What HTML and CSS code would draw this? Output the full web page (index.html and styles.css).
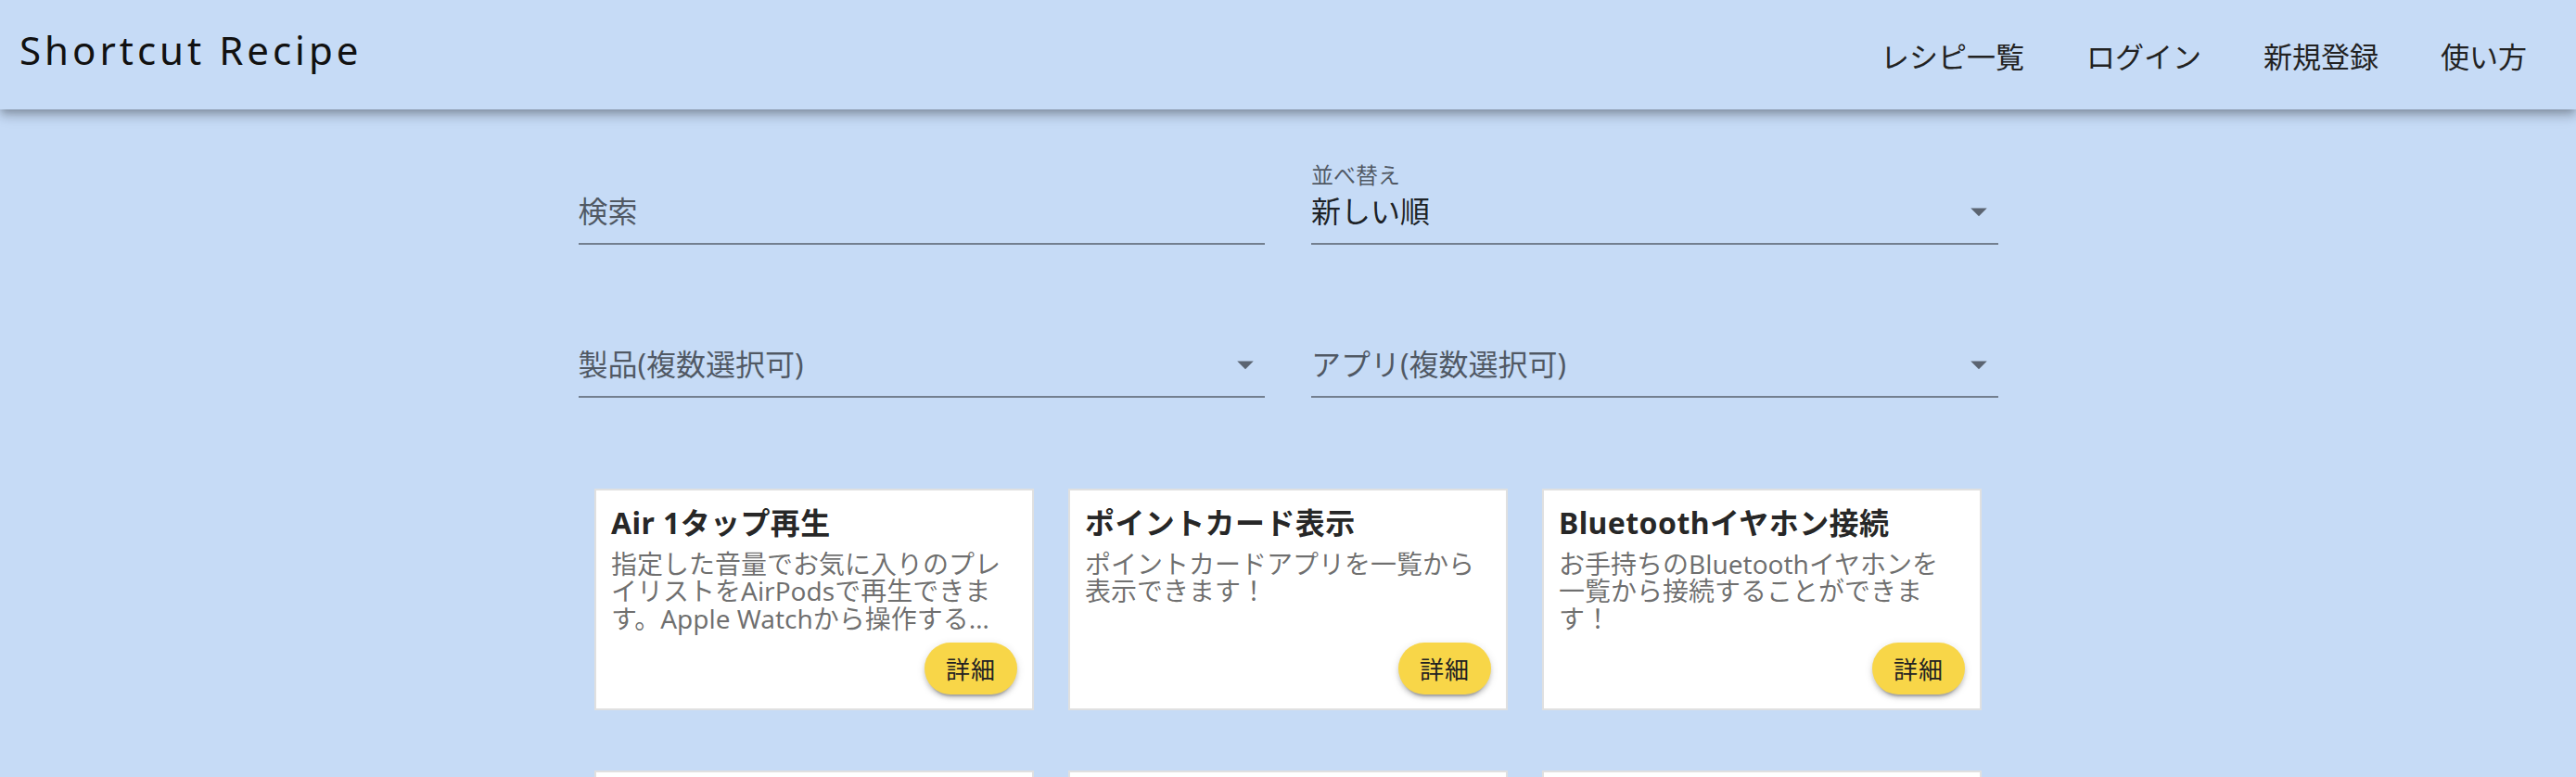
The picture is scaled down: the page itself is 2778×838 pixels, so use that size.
FILE: index.html
```html
<!DOCTYPE html>
<html lang="ja">
<head>
<meta charset="utf-8">
<title>Shortcut Recipe</title>
<link rel="stylesheet" href="styles.css">
</head>
<body>
<header class="appbar">
  <div class="brand">Shortcut Recipe</div>
  <nav class="nav">
    <a class="nav-item">レシピ一覧</a>
    <a class="nav-item">ログイン</a>
    <a class="nav-item">新規登録</a>
    <a class="nav-item">使い方</a>
  </nav>
</header>

<main class="main">
  <section class="filters">
    <div class="field">
      <div class="field-label"></div>
      <div class="field-row">
        <span class="field-value placeholder">検索</span>
      </div>
    </div>
    <div class="field">
      <div class="field-label">並べ替え</div>
      <div class="field-row">
        <span class="field-value">新しい順</span>
        <svg class="drop" viewBox="0 0 24 24"><path d="M7 10l5 5 5-5z"/></svg>
      </div>
    </div>
    <div class="field">
      <div class="field-label"></div>
      <div class="field-row">
        <span class="field-value placeholder">製品(複数選択可)</span>
        <svg class="drop" viewBox="0 0 24 24"><path d="M7 10l5 5 5-5z"/></svg>
      </div>
    </div>
    <div class="field">
      <div class="field-label"></div>
      <div class="field-row">
        <span class="field-value placeholder">アプリ(複数選択可)</span>
        <svg class="drop" viewBox="0 0 24 24"><path d="M7 10l5 5 5-5z"/></svg>
      </div>
    </div>
  </section>

  <section class="cards">
    <article class="card">
      <h2 class="card-title">Air 1タップ再生</h2>
      <p class="card-desc">指定した音量でお気に入りのプレイリストをAirPodsで再生できます。Apple Watchから操作する…</p>
      <button class="detail">詳細</button>
    </article>
    <article class="card">
      <h2 class="card-title">ポイントカード表示</h2>
      <p class="card-desc">ポイントカードアプリを一覧から表示できます！</p>
      <button class="detail">詳細</button>
    </article>
    <article class="card">
      <h2 class="card-title">Bluetoothイヤホン接続</h2>
      <p class="card-desc">お手持ちのBluetoothイヤホンを一覧から接続することができます！</p>
      <button class="detail">詳細</button>
    </article>
    <article class="card"></article>
    <article class="card"></article>
    <article class="card"></article>
  </section>
</main>
</body>
</html>
```

FILE: styles.css
```css
* {
  box-sizing: border-box;
}

html, body {
  margin: 0;
  padding: 0;
}

body {
  background: #c6dbf6;
  font-family: "Noto Sans", "Noto Sans CJK JP", sans-serif;
  color: rgba(0, 0, 0, 0.87);
}

.appbar {
  position: relative;
  z-index: 2;
  height: 118px;
  background: #c6dbf6;
  display: flex;
  align-items: center;
  justify-content: space-between;
  padding: 0 53px 0 21px;
  box-shadow: 0 4px 8px -2px rgba(0, 0, 0, 0.2),
              0 8px 10px 0 rgba(0, 0, 0, 0.14),
              0 2px 20px 0 rgba(0, 0, 0, 0.12);
}

.brand {
  font-size: 42px;
  line-height: 50px;
  letter-spacing: 4px;
  color: #111;
  margin-bottom: 10px;
}

.nav {
  display: flex;
  gap: 67px;
  margin-top: 4px;
}

.nav-item {
  font-size: 31px;
  line-height: 40px;
  color: #222;
}

.main {
  padding-bottom: 40px;
}

.filters {
  width: 1531px;
  margin: 55px auto 0;
  display: grid;
  grid-template-columns: 1fr 1fr;
  column-gap: 50px;
  row-gap: 74px;
}

.field {
  display: flex;
  flex-direction: column;
  border-bottom: 2px solid rgba(0, 0, 0, 0.42);
}

.field-label {
  height: 32px;
  font-size: 24px;
  line-height: 32px;
  color: rgba(0, 0, 0, 0.6);
}

.field-row {
  display: flex;
  align-items: center;
  height: 57px;
  padding-bottom: 11px;
}

.field-value {
  flex: 1;
  font-size: 32px;
  line-height: 46px;
  color: rgba(0, 0, 0, 0.87);
}

.field-value.placeholder {
  color: rgba(0, 0, 0, 0.6);
}

.drop {
  width: 42px;
  height: 42px;
  fill: rgba(0, 0, 0, 0.54);
}

.cards {
  width: 1496px;
  margin: 98px auto 0;
  display: grid;
  grid-template-columns: repeat(3, 474px);
  column-gap: 37px;
  row-gap: 65px;
}

.card {
  height: 239px;
  background: #fff;
  border: 2px solid #e0e0e0;
  padding: 15px 16px 15px 16px;
  display: flex;
  flex-direction: column;
}

.card-title {
  margin: 0;
  font-size: 32px;
  line-height: 40px;
  font-weight: 700;
  letter-spacing: 0.4px;
  color: rgba(0, 0, 0, 0.87);
}

.card-desc {
  margin: 10px 8px 0 0;
  font-size: 28px;
  line-height: 29.3px;
  color: rgba(0, 0, 0, 0.58);
}

.detail {
  margin-top: auto;
  align-self: flex-end;
  width: 100px;
  height: 56px;
  border: 0;
  border-radius: 28px;
  background: #f8d648;
  font-family: "Noto Sans", "Noto Sans CJK JP", sans-serif;
  font-size: 26px;
  letter-spacing: 1px;
  color: #222;
  padding: 0;
  box-shadow: 0 6px 2px -4px rgba(0, 0, 0, 0.2),
              0 4px 4px 0 rgba(0, 0, 0, 0.14),
              0 2px 10px 0 rgba(0, 0, 0, 0.12);
}
```
